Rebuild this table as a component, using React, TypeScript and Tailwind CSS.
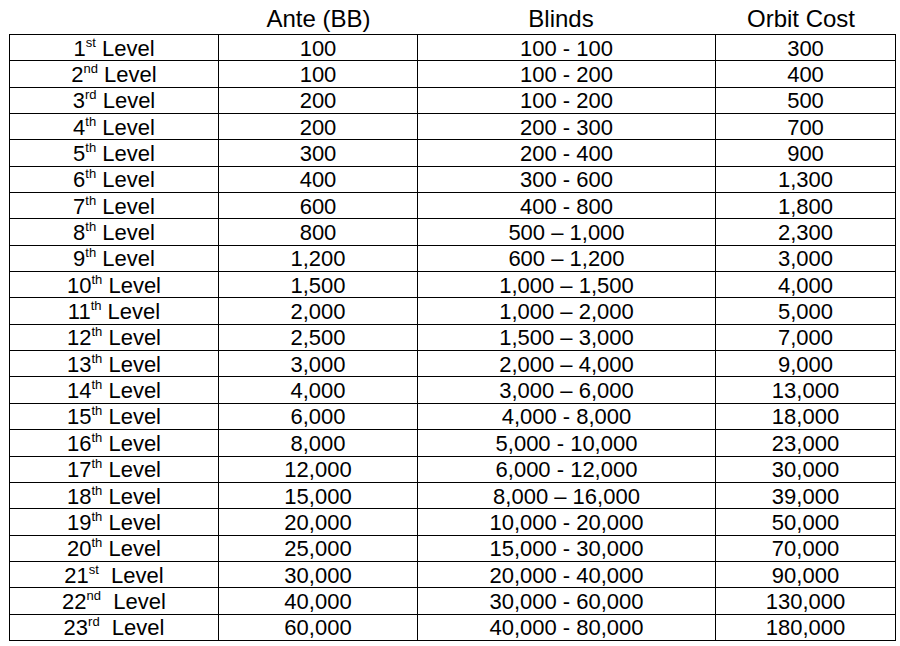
const rows: [string, string, string, string, string, string][] = [
  ['1', 'st', ' ', '100', '100 - 100', '300'],
  ['2', 'nd', ' ', '100', '100 - 200', '400'],
  ['3', 'rd', ' ', '200', '100 - 200', '500'],
  ['4', 'th', ' ', '200', '200 - 300', '700'],
  ['5', 'th', ' ', '300', '200 - 400', '900'],
  ['6', 'th', ' ', '400', '300 - 600', '1,300'],
  ['7', 'th', ' ', '600', '400 - 800', '1,800'],
  ['8', 'th', ' ', '800', '500 – 1,000', '2,300'],
  ['9', 'th', ' ', '1,200', '600 – 1,200', '3,000'],
  ['10', 'th', ' ', '1,500', '1,000 – 1,500', '4,000'],
  ['11', 'th', ' ', '2,000', '1,000 – 2,000', '5,000'],
  ['12', 'th', ' ', '2,500', '1,500 – 3,000', '7,000'],
  ['13', 'th', ' ', '3,000', '2,000 – 4,000', '9,000'],
  ['14', 'th', ' ', '4,000', '3,000 – 6,000', '13,000'],
  ['15', 'th', ' ', '6,000', '4,000 - 8,000', '18,000'],
  ['16', 'th', ' ', '8,000', '5,000 - 10,000', '23,000'],
  ['17', 'th', ' ', '12,000', '6,000 - 12,000', '30,000'],
  ['18', 'th', ' ', '15,000', '8,000 – 16,000', '39,000'],
  ['19', 'th', ' ', '20,000', '10,000 - 20,000', '50,000'],
  ['20', 'th', ' ', '25,000', '15,000 - 30,000', '70,000'],
  ['21', 'st', '  ', '30,000', '20,000 - 40,000', '90,000'],
  ['22', 'nd', '  ', '40,000', '30,000 - 60,000', '130,000'],
  ['23', 'rd', '  ', '60,000', '40,000 - 80,000', '180,000'],
]

const cell = 'flex items-center justify-center pt-[2px] border-r border-b border-black leading-none whitespace-pre'

export default function App() {
  return (
    <div className="w-[900px] h-[646px] bg-white text-black overflow-hidden font-['Liberation_Sans',Arial,sans-serif]">
      <div className="ml-[9px] grid grid-cols-[210px_199px_298px_180px] h-[34px] text-[24px] leading-none">
        <div />
        <div className="flex items-end justify-center pb-[3px]">Ante (BB)</div>
        <div className="flex items-end justify-center pb-[3px] pr-[12px]">Blinds</div>
        <div className="flex items-end justify-center pb-[3px] pr-[10px]">Orbit Cost</div>
      </div>
      <div className="ml-[9px] w-[887px] grid grid-cols-[209px_199px_298px_180px] auto-rows-[26.35px] border-l border-t border-black text-[22px]">
        {rows.map(([n, suf, gap, ante, blinds, orbit]) => (
          <div key={n} className="contents">
            <div className={cell}>
              <span>
                {n}
                <sup className="text-[13px] top-[-9px]">{suf}</sup>
                {gap + 'Level'}
              </span>
            </div>
            <div className={cell}>{ante}</div>
            <div className={cell}>{blinds}</div>
            <div className={cell}>{orbit}</div>
          </div>
        ))}
      </div>
    </div>
  )
}
